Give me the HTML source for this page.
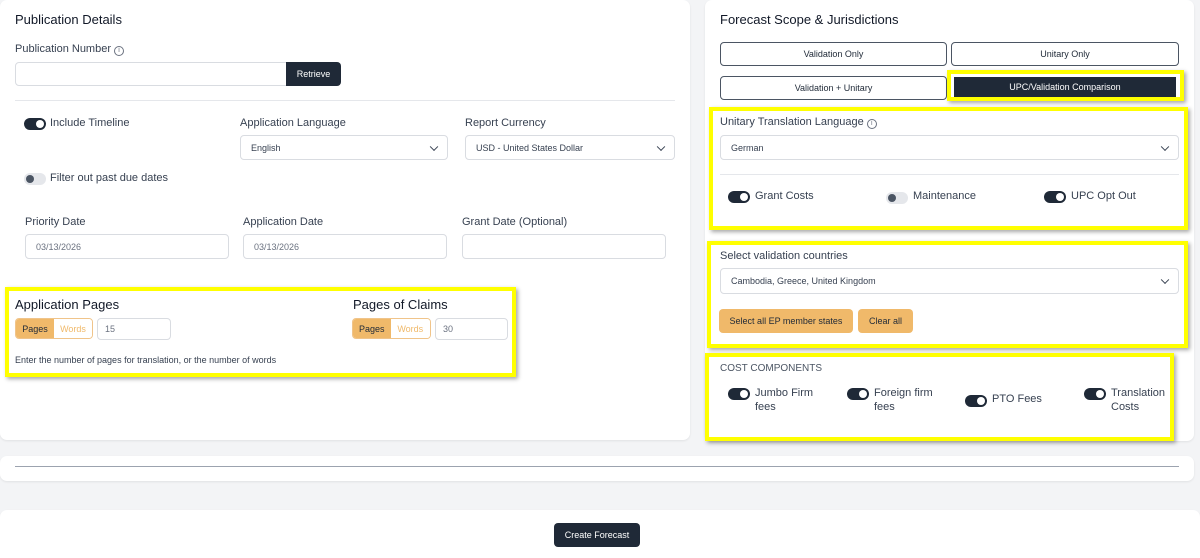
<!DOCTYPE html>
<html><head><meta charset="utf-8"><style>
*{box-sizing:border-box;margin:0;padding:0}
html,body{width:1200px;height:558px;overflow:hidden}
body{background:#f3f4f6;font-family:"Liberation Sans",sans-serif;color:#1f2937;position:relative;font-size:11px}
.a{position:absolute}
.card{position:absolute;background:#fff;border-radius:7px;box-shadow:0 1px 2px rgba(0,0,0,.08)}
.h{font-size:13px;color:#111827}
.lbl{font-size:11px;color:#374151}
.inp{position:absolute;border:1px solid #d9dce1;border-radius:4px;background:#fff;font-size:9px;color:#374151;padding-left:10px;display:flex;align-items:center}
.ph{color:#6b7280}
.chev{position:absolute;right:10px;top:50%;width:6px;height:6px;border-right:1.3px solid #374151;border-bottom:1.3px solid #374151;transform:translateY(-70%) rotate(45deg)}
.tg{position:absolute;width:22px;height:12px;border-radius:6px;background:#1f2937}
.tg::after{content:"";position:absolute;right:2px;top:2px;width:8px;height:8px;border-radius:50%;background:#fff}
.tg.off{background:#e5e7eb}
.tg.off::after{left:2px;right:auto;background:#4b5563}
.btn{position:absolute;border:1px solid #4b5563;border-radius:4px;background:#fff;font-size:9px;display:flex;align-items:center;justify-content:center;color:#1f2937}
.y{position:absolute;border:4px solid #ffff00;box-shadow:2px 2px 4px rgba(0,0,0,.35)}
.seg{position:absolute;height:21px;display:flex;border:1px solid #f0c48a;border-radius:4px;overflow:hidden;font-size:9px}
.seg span{display:flex;align-items:center;justify-content:center}
.seg .on{background:#f0b96a;color:#1f2937}
.seg .of{color:#f0b96a;background:#fff}
.ob{position:absolute;background:#f0b96a;border-radius:4px;font-size:9px;display:flex;align-items:center;justify-content:center;color:#1f2937}
.i{display:inline-block;width:10px;height:10px;border:1px solid #6b7280;border-radius:50%;font-size:7px;text-align:center;line-height:8px;color:#6b7280;vertical-align:0}
</style></head><body>
<div class="card" style="left:0;top:0;width:690px;height:440px"></div>
<div class="card" style="left:705px;top:0;width:489px;height:441px"></div>
<div class="card" style="left:0;top:456px;width:1194px;height:25px"></div>
<div class="a" style="left:15px;top:466px;width:1164px;height:1px;background:#9ca3af"></div>
<div class="card" style="left:0;top:510px;width:1200px;height:48px;border-radius:7px 7px 0 0"></div>
<div class="a" style="left:554px;top:523px;width:86px;height:24px;background:#1f2937;border-radius:4px;color:#fff;font-size:9px;display:flex;align-items:center;justify-content:center">Create Forecast</div>

<!-- left -->
<div class="a h" style="left:15px;top:12px">Publication Details</div>
<div class="a lbl" style="left:15px;top:43px">Publication Number <span class="i">i</span></div>
<div class="inp" style="left:15px;top:62px;width:275px;height:24px"></div>
<div class="a" style="left:286px;top:62px;width:55px;height:24px;background:#1f2937;border-radius:0 4px 4px 0;color:#fff;font-size:9px;display:flex;align-items:center;justify-content:center">Retrieve</div>
<div class="a" style="left:15px;top:100px;width:660px;height:1px;background:#e5e7eb"></div>
<div class="tg" style="left:24px;top:118px"></div>
<div class="a lbl" style="left:50px;top:117px">Include Timeline</div>
<div class="a lbl" style="left:240px;top:117px">Application Language</div>
<div class="inp" style="left:240px;top:135px;width:208px;height:25px">English<div class="chev"></div></div>
<div class="a lbl" style="left:465px;top:117px">Report Currency</div>
<div class="inp" style="left:465px;top:135px;width:210px;height:25px">USD - United States Dollar<div class="chev"></div></div>
<div class="tg off" style="left:24px;top:173px"></div>
<div class="a lbl" style="left:50px;top:172px">Filter out past due dates</div>
<div class="a lbl" style="left:25px;top:216px">Priority Date</div>
<div class="inp ph" style="left:25px;top:234px;width:204px;height:25px">03/13/2026</div>
<div class="a lbl" style="left:243px;top:216px">Application Date</div>
<div class="inp ph" style="left:243px;top:234px;width:204px;height:25px">03/13/2026</div>
<div class="a lbl" style="left:462px;top:216px">Grant Date (Optional)</div>
<div class="inp" style="left:462px;top:234px;width:204px;height:25px"></div>

<div class="y" style="left:5px;top:287px;width:511px;height:90px"></div>
<div class="a h" style="left:15px;top:297px">Application Pages</div>
<div class="seg" style="left:15px;top:318px;width:78px"><span class="on" style="width:39px">Pages</span><span class="of" style="width:39px">Words</span></div>
<div class="inp ph" style="left:97px;top:318px;width:74px;height:22px;padding-left:7px">15</div>
<div class="a h" style="left:353px;top:297px">Pages of Claims</div>
<div class="seg" style="left:352px;top:318px;width:79px"><span class="on" style="width:38px">Pages</span><span class="of" style="width:40px">Words</span></div>
<div class="inp ph" style="left:435px;top:318px;width:73px;height:22px;padding-left:7px">30</div>
<div class="a" style="left:15px;top:355px;font-size:9px;color:#374151">Enter the number of pages for translation, or the number of words</div>

<!-- right -->
<div class="a h" style="left:720px;top:12px">Forecast Scope &amp; Jurisdictions</div>
<div class="btn" style="left:720px;top:42px;width:227px;height:24px">Validation Only</div>
<div class="btn" style="left:951px;top:42px;width:228px;height:24px">Unitary Only</div>
<div class="btn" style="left:720px;top:76px;width:227px;height:24px">Validation + Unitary</div>
<div class="y" style="left:947px;top:70px;width:237px;height:31px"></div>
<div class="a" style="left:954px;top:77px;width:222px;height:20px;background:#1f2937;color:#fff;font-size:9px;display:flex;align-items:center;justify-content:center">UPC/Validation Comparison</div>

<div class="y" style="left:709px;top:107px;width:479px;height:123px"></div>
<div class="a lbl" style="left:720px;top:116px">Unitary Translation Language <span class="i">i</span></div>
<div class="inp" style="left:720px;top:135px;width:459px;height:25px">German<div class="chev"></div></div>
<div class="a" style="left:720px;top:174px;width:459px;height:1px;background:#e5e7eb"></div>
<div class="tg" style="left:728px;top:191px"></div>
<div class="a lbl" style="left:755px;top:190px">Grant Costs</div>
<div class="tg off" style="left:886px;top:192px"></div>
<div class="a lbl" style="left:913px;top:190px">Maintenance</div>
<div class="tg" style="left:1044px;top:191px"></div>
<div class="a lbl" style="left:1071px;top:190px">UPC Opt Out</div>

<div class="y" style="left:707px;top:241px;width:481px;height:107px"></div>
<div class="a lbl" style="left:720px;top:250px">Select validation countries</div>
<div class="inp" style="left:720px;top:268px;width:459px;height:26px">Cambodia, Greece, United Kingdom<div class="chev"></div></div>
<div class="ob" style="left:719px;top:309px;width:134px;height:24px">Select all EP member states</div>
<div class="ob" style="left:858px;top:309px;width:55px;height:24px">Clear all</div>

<div class="y" style="left:705px;top:353px;width:469px;height:88px"></div>
<div class="a" style="left:720px;top:363px;font-size:10px;color:#4b5563">COST COMPONENTS</div>
<div class="tg" style="left:728px;top:388px"></div>
<div class="a lbl" style="left:755px;top:386px;line-height:14px">Jumbo Firm<br>fees</div>
<div class="tg" style="left:847px;top:388px"></div>
<div class="a lbl" style="left:874px;top:386px;line-height:14px">Foreign firm<br>fees</div>
<div class="tg" style="left:965px;top:395px"></div>
<div class="a lbl" style="left:992px;top:393px">PTO Fees</div>
<div class="tg" style="left:1084px;top:388px"></div>
<div class="a lbl" style="left:1111px;top:386px;line-height:14px">Translation<br>Costs</div>
</body></html>
